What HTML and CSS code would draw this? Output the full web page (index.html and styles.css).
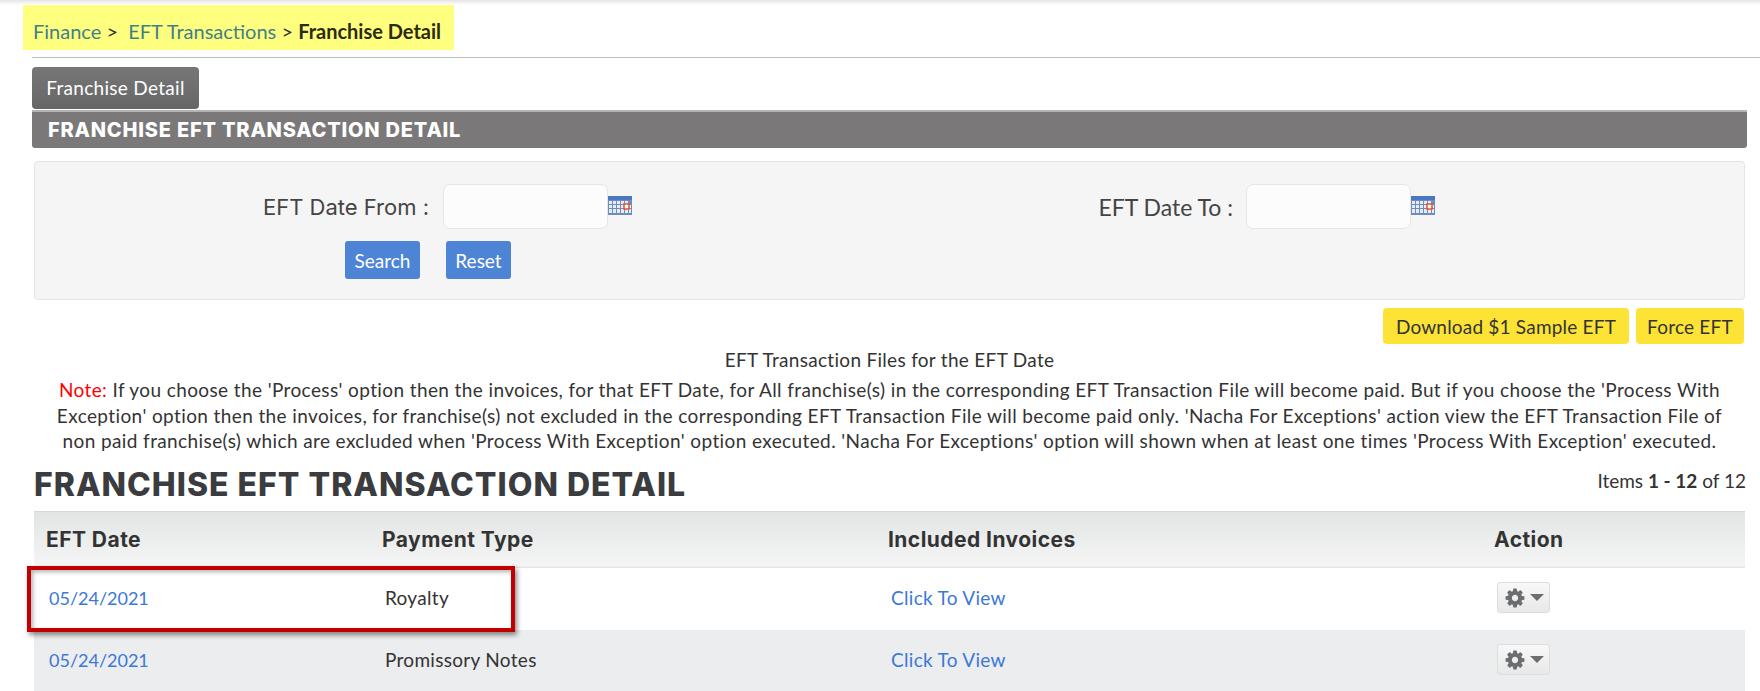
FILE: index.html
```html
<!DOCTYPE html>
<html lang="en">
<head>
    <meta charset="UTF-8">
    <title>Franchise Detail</title>
    <link rel="stylesheet" href="styles.css">
</head>
<body>
    <div class="top-shadow"></div>

    <div class="breadcrumb">
        <a href="#">Finance</a> &gt;&nbsp; <a href="#">EFT Transactions</a> &gt; <strong>Franchise Detail</strong>
    </div>
    <div class="rule"></div>

    <div class="page">
        <div class="tab">Franchise Detail</div>
        <div class="section-bar">FRANCHISE EFT TRANSACTION DETAIL</div>

        <div class="filter-panel">
            <div class="filter-row">
                <label class="label-from">EFT Date From :</label>
                <input type="text" class="date-input">
                <svg class="cal-icon" viewBox="0 0 24 19">
                    <rect x="0" y="0" width="24" height="19" fill="#6f8cba"/>
                    <rect x="0" y="0" width="24" height="4" fill="#4a76c4"/>
                    <g fill="#e6ecf6">
                        <rect x="1" y="5" width="3" height="3"/><rect x="5" y="5" width="3" height="3"/><rect x="9" y="5" width="3" height="3"/><rect x="13" y="5" width="3" height="3"/><rect x="17" y="5" width="3" height="3"/>
                        <rect x="1" y="9" width="3" height="3"/><rect x="5" y="9" width="3" height="3"/><rect x="9" y="9" width="3" height="3"/><rect x="13" y="9" width="3" height="3"/><rect x="21" y="9" width="2" height="3"/>
                        <rect x="1" y="13" width="3" height="4"/><rect x="5" y="13" width="3" height="4"/><rect x="9" y="13" width="3" height="4"/><rect x="13" y="13" width="3" height="4"/><rect x="17" y="13" width="3" height="4"/><rect x="21" y="13" width="2" height="4"/>
                    </g>
                    <rect x="16" y="8" width="5" height="5" fill="#fff" stroke="#e8502a" stroke-width="1.5"/>
                </svg>
                <label class="label-to">EFT Date To :</label>
                <input type="text" class="date-input">
                <svg class="cal-icon" viewBox="0 0 24 19">
                    <rect x="0" y="0" width="24" height="19" fill="#6f8cba"/>
                    <rect x="0" y="0" width="24" height="4" fill="#4a76c4"/>
                    <g fill="#e6ecf6">
                        <rect x="1" y="5" width="3" height="3"/><rect x="5" y="5" width="3" height="3"/><rect x="9" y="5" width="3" height="3"/><rect x="13" y="5" width="3" height="3"/><rect x="17" y="5" width="3" height="3"/>
                        <rect x="1" y="9" width="3" height="3"/><rect x="5" y="9" width="3" height="3"/><rect x="9" y="9" width="3" height="3"/><rect x="13" y="9" width="3" height="3"/><rect x="21" y="9" width="2" height="3"/>
                        <rect x="1" y="13" width="3" height="4"/><rect x="5" y="13" width="3" height="4"/><rect x="9" y="13" width="3" height="4"/><rect x="13" y="13" width="3" height="4"/><rect x="17" y="13" width="3" height="4"/><rect x="21" y="13" width="2" height="4"/>
                    </g>
                    <rect x="16" y="8" width="5" height="5" fill="#fff" stroke="#e8502a" stroke-width="1.5"/>
                </svg>
            </div>
            <div class="filter-buttons">
                <button class="btn-blue btn-search">Search</button>
                <button class="btn-blue btn-reset">Reset</button>
            </div>
        </div>

        <div class="yellow-actions">
            <button class="btn-yellow btn-download">Download $1 Sample EFT</button>
            <button class="btn-yellow btn-force">Force EFT</button>
        </div>

        <div class="files-title">EFT Transaction Files for the EFT Date</div>
        <p class="note">
            <span class="note-label">Note:</span> If you choose the 'Process' option then the invoices, for that EFT Date, for All franchise(s) in the corresponding EFT Transaction File will become paid. But if you choose the 'Process With<br>
            Exception' option then the invoices, for franchise(s) not excluded in the corresponding EFT Transaction File will become paid only. 'Nacha For Exceptions' action view the EFT Transaction File of<br>
            non paid franchise(s) which are excluded when 'Process With Exception' option executed. 'Nacha For Exceptions' option will shown when at least one times 'Process With Exception' executed.
        </p>

        <div class="list-head">
            <h2>FRANCHISE EFT TRANSACTION DETAIL</h2>
            <div class="items-count">Items <strong>1 - 12</strong> of 12</div>
        </div>

        <div class="table-wrap">
            <table class="eft-table">
                <thead>
                    <tr>
                        <th class="col-date">EFT Date</th>
                        <th class="col-type">Payment Type</th>
                        <th class="col-inv">Included Invoices</th>
                        <th>Action</th>
                    </tr>
                </thead>
                <tbody>
                    <tr>
                        <td><a href="#" class="date-link">05/24/2021</a></td>
                        <td>Royalty</td>
                        <td><a href="#">Click To View</a></td>
                        <td><button class="gear-btn"><svg class="gear" viewBox="0 0 1792 1792"><path d="M1152 896q0-106-75-181t-181-75-181 75-75 181 75 181 181 75 181-75 75-181zm512-109v222q0 12-8 23t-20 13l-185 28q-19 54-39 91 35 50 107 138 10 12 10 25t-9 23q-27 37-99 108t-94 71q-12 0-26-9l-138-108q-44 23-91 38-16 136-29 186-7 28-36 28h-222q-14 0-24.5-8.5t-11.5-21.5l-28-184q-49-16-90-37l-141 107q-10 9-25 9-14 0-25-11-126-114-165-168-7-10-7-23 0-12 8-23 15-21 51-66.5t54-70.5q-27-50-41-99l-183-27q-13-2-21-12.5t-8-23.5v-222q0-12 8-23t19-13l186-28q14-46 39-92-40-57-107-138-10-12-10-24 0-10 9-23 26-36 98.5-107.5t94.5-71.5q13 0 26 10l138 107q44-23 91-38 16-136 29-186 7-28 36-28h222q14 0 24.5 8.5t11.5 21.5l28 184q49 16 90 37l142-107q9-9 24-9 13 0 25 10 129 119 165 170 7 8 7 22 0 12-8 23-15 21-51 66.5t-54 70.5q26 50 41 98l183 28q13 2 21 12.5t8 23.5z"/></svg><span class="caret"></span></button></td>
                    </tr>
                    <tr class="alt">
                        <td><a href="#" class="date-link">05/24/2021</a></td>
                        <td>Promissory Notes</td>
                        <td><a href="#">Click To View</a></td>
                        <td><button class="gear-btn"><svg class="gear" viewBox="0 0 1792 1792"><path d="M1152 896q0-106-75-181t-181-75-181 75-75 181 75 181 181 75 181-75 75-181zm512-109v222q0 12-8 23t-20 13l-185 28q-19 54-39 91 35 50 107 138 10 12 10 25t-9 23q-27 37-99 108t-94 71q-12 0-26-9l-138-108q-44 23-91 38-16 136-29 186-7 28-36 28h-222q-14 0-24.5-8.5t-11.5-21.5l-28-184q-49-16-90-37l-141 107q-10 9-25 9-14 0-25-11-126-114-165-168-7-10-7-23 0-12 8-23 15-21 51-66.5t54-70.5q-27-50-41-99l-183-27q-13-2-21-12.5t-8-23.5v-222q0-12 8-23t19-13l186-28q14-46 39-92-40-57-107-138-10-12-10-24 0-10 9-23 26-36 98.5-107.5t94.5-71.5q13 0 26 10l138 107q44-23 91-38 16-136 29-186 7-28 36-28h222q14 0 24.5 8.5t11.5 21.5l28 184q49 16 90 37l142-107q9-9 24-9 13 0 25 10 129 119 165 170 7 8 7 22 0 12-8 23-15 21-51 66.5t-54 70.5q26 50 41 98l183 28q13 2 21 12.5t8 23.5z"/></svg><span class="caret"></span></button></td>
                    </tr>
                </tbody>
            </table>
            <!-- annotation drawn on top of the first row -->
            <div class="highlight-box"></div>
        </div>
    </div>
</body>
</html>
```

FILE: styles.css
```css
html, body {
    height: 691px;
    overflow: hidden;
}
body {
    font-family: "Lato", "Open Sans", sans-serif;
    font-size: 19px;
    letter-spacing: 0.3px;
    color: #333;
    margin: 0;
    background-color: #fff;
}
a {
    color: #3b78d8;
    text-decoration: none;
}
.top-shadow {
    height: 5px;
    background: linear-gradient(#e4e4e4, #fff);
}
.breadcrumb {
    display: inline-block;
    margin-left: 23px;
    height: 45px;
    width: 431px;
    box-sizing: border-box;
    padding: 13px 0 0 10px;
    font-size: 20px;
    letter-spacing: 0;
    line-height: 26px;
    background-color: #ffff7f;
    color: #333;
    vertical-align: top;
}
.breadcrumb a {
    color: #3f8188;
}
.breadcrumb strong {
    color: #2b2b10;
}
.rule {
    margin: 7px 0 0 32px;
    height: 1px;
    background-color: #bdbdbd;
}
.page {
    width: 1715px;
    margin-left: 32px;
}
.tab {
    width: 167px;
    height: 42px;
    margin-top: 9px;
    box-sizing: border-box;
    border-radius: 4px;
    background: linear-gradient(#777, #666);
    color: #fff;
    line-height: 41px;
    text-align: center;
}
.section-bar {
    height: 38px;
    margin-top: 1px;
    padding-left: 16px;
    background-color: #7a7879;
    border-top: 2px solid #b4b4b4;
    border-radius: 0 0 3px 3px;
    box-sizing: border-box;
    color: #fff;
    font-family: "Inter", sans-serif;
    font-weight: 800;
    font-size: 20px;
    letter-spacing: 0.8px;
    line-height: 37px;
}
.filter-panel {
    width: 1711px;
    height: 139px;
    margin: 13px 0 0 2px;
    box-sizing: border-box;
    padding-top: 22px;
    background-color: #f5f5f5;
    border: 1px solid #e4e4e4;
    border-radius: 4px;
}
.filter-row {
    display: flex;
    align-items: center;
}
.filter-row label {
    color: #444;
    text-align: right;
}
.label-from {
    width: 394px;
    margin-right: 14px;
    font-family: "Inter", sans-serif;
    font-size: 22px;
    letter-spacing: 0;
}
.label-to {
    width: 601px;
    margin-right: 13px;
    font-size: 23px;
    letter-spacing: 0;
}
.date-input {
    width: 165px;
    height: 45px;
    box-sizing: border-box;
    background-color: #fcfcfc;
    border: 1px solid #e6e6e6;
    border-radius: 7px;
}
.cal-icon {
    width: 24px;
    height: 19px;
    margin-top: -2px;
}
.filter-buttons {
    display: flex;
    margin-top: 12px;
    padding-left: 310px;
}
.btn-blue {
    height: 38px;
    padding: 0;
    border: none;
    border-radius: 3px;
    background-color: #4d84d6;
    color: #fff;
    font-family: inherit;
    font-size: 19px;
    letter-spacing: 0;
}
.btn-search {
    width: 75px;
}
.btn-reset {
    width: 65px;
    margin-left: 26px;
}
.yellow-actions {
    display: flex;
    justify-content: flex-end;
    gap: 7px;
    width: 1712px;
    margin-top: 8px;
}
.btn-yellow {
    height: 36px;
    padding: 0;
    border: none;
    border-radius: 4px;
    background-color: #fde335;
    color: #333;
    font-family: inherit;
    font-size: 19px;
    letter-spacing: 0.2px;
}
.btn-download {
    width: 246px;
}
.btn-force {
    width: 108px;
}
.files-title {
    margin-top: 3px;
    text-align: center;
    line-height: 26px;
}
.note {
    margin: 4px 0 0;
    text-align: center;
    line-height: 25.5px;
    letter-spacing: 0.39px;
}
.note-label {
    color: #f00;
}
.list-head {
    display: flex;
    justify-content: space-between;
    align-items: flex-start;
    width: 1712px;
    margin-top: 10px;
    margin-left: 2px;
}
.list-head h2 {
    margin: 0;
    font-family: "Inter", sans-serif;
    font-size: 32px;
    font-weight: 800;
    letter-spacing: 1px;
    line-height: 42px;
    color: #3a3c40;
}
.items-count {
    letter-spacing: 0;
    line-height: 26px;
    margin-top: 4px;
}
.table-wrap {
    position: relative;
    width: 1711px;
    margin: 5px 0 0 2px;
}
.eft-table {
    width: 100%;
    border-collapse: collapse;
    table-layout: fixed;
}
.eft-table th {
    height: 56px;
    padding: 0 12px;
    box-sizing: border-box;
    text-align: left;
    font-family: "Inter", sans-serif;
    font-size: 21px;
    font-weight: 700;
    letter-spacing: 0.45px;
    color: #333;
    background: linear-gradient(#e2e4e4, #f5f5f5);
    border-top: 1px solid #d8d8d8;
    border-bottom: 1px solid #e6e6e6;
}
.col-date {
    width: 336px;
}
.col-type {
    width: 506px;
}
.col-inv {
    width: 606px;
}
.eft-table td {
    height: 62.5px;
    padding: 0 15px 2px;
    box-sizing: border-box;
}
.date-link {
    font-size: 18px;
    letter-spacing: 0;
}
.alt td {
    background-color: #ecedee;
}
.gear-btn {
    display: flex;
    align-items: center;
    justify-content: center;
    gap: 4px;
    width: 53px;
    height: 31px;
    padding: 0;
    border: 1px solid #ddd;
    border-radius: 3px;
    background: linear-gradient(#f8f8f8, #e8e8e8);
}
.gear {
    width: 22px;
    height: 22px;
    fill: #6b6e70;
}
.caret {
    border-left: 7px solid transparent;
    border-right: 7px solid transparent;
    border-top: 7px solid #6b6e70;
}
.highlight-box {
    position: absolute;
    left: -7px;
    top: 55px;
    width: 488px;
    height: 66px;
    box-sizing: border-box;
    border: 4px solid #c00000;
    box-shadow: 2px 3px 5px rgba(0,0,0,0.45), inset 2px 2px 4px rgba(0,0,0,0.3);
}
```
